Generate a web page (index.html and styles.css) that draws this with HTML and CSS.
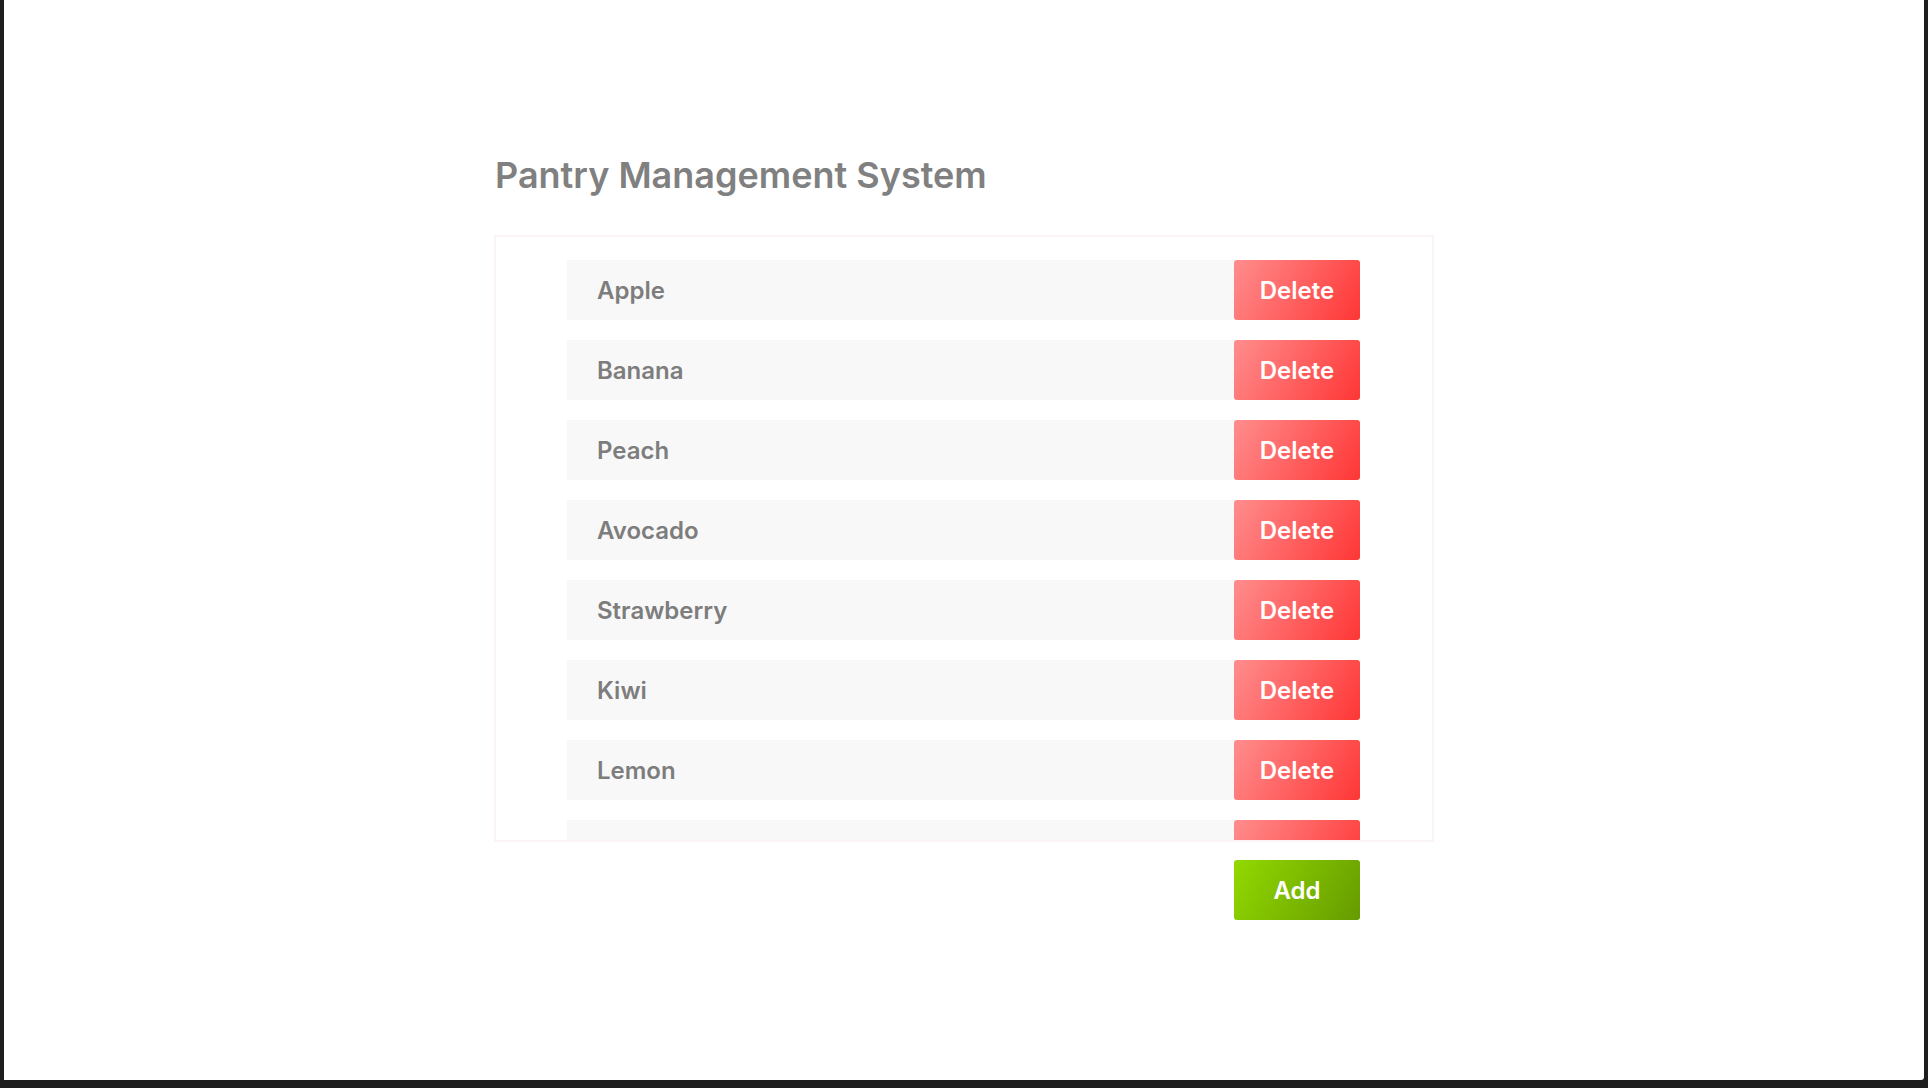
FILE: index.html
```html
<!DOCTYPE html>
<html lang="en">
<head>
<meta charset="utf-8">
<title>Pantry Management System</title>
<link rel="stylesheet" href="styles.css">
</head>
<body>
<div class="page">
  <main class="app">
    <h1 class="title">Pantry Management System</h1>
    <section class="list">
      <div class="item"><div class="name">Apple</div><button class="btn delete">Delete</button></div>
      <div class="item"><div class="name">Banana</div><button class="btn delete">Delete</button></div>
      <div class="item"><div class="name">Peach</div><button class="btn delete">Delete</button></div>
      <div class="item"><div class="name">Avocado</div><button class="btn delete">Delete</button></div>
      <div class="item"><div class="name">Strawberry</div><button class="btn delete">Delete</button></div>
      <div class="item"><div class="name">Kiwi</div><button class="btn delete">Delete</button></div>
      <div class="item"><div class="name">Lemon</div><button class="btn delete">Delete</button></div>
      <div class="item"><div class="name">Mango</div><button class="btn delete">Delete</button></div>
    </section>
    <div class="actions"><button class="btn add">Add</button></div>
  </main>
</div>
</body>
</html>
```

FILE: styles.css
```css
html, body {
  margin: 0;
  padding: 0;
  background: #1e1e1e;
}
body {
  font-family: Inter, "Noto Sans", sans-serif;
}
.page {
  width: 1920px;
  height: 1080px;
  margin-left: 4px;
  background: #ffffff;
  border-bottom-right-radius: 3px;
  padding-top: 153px;
  box-sizing: border-box;
}
.app {
  width: 940px;
  margin: 0 auto;
}
.title {
  margin: 0 0 37px 1px;
  font-size: 36px;
  line-height: 45px;
  font-weight: 600;
  color: #808080;
}
.list {
  height: 607px;
  box-sizing: border-box;
  border: 2px solid #faf4f4;
  padding: 23px 72px 0 71px;
  overflow: hidden;
}
.item {
  display: flex;
  height: 60px;
  margin-bottom: 20px;
}
.name {
  flex: 1;
  display: flex;
  align-items: center;
  padding-left: 30px;
  background: #f8f8f8;
  color: #7d7d7d;
  font-size: 24px;
  font-weight: 600;
}
.btn {
  width: 126px;
  height: 60px;
  border: 0;
  border-radius: 3px;
  color: #ffffff;
  font-family: Inter, "Noto Sans", sans-serif;
  font-size: 24px;
  font-weight: 600;
  padding: 0;
}
.delete {
  background: linear-gradient(120deg, #ff8d8d 0%, #ff3636 100%);
}
.actions {
  display: flex;
  justify-content: flex-end;
  padding: 18px 74px 0 0;
}
.add {
  background: linear-gradient(120deg, #92d900 0%, #669b00 100%);
}
```
